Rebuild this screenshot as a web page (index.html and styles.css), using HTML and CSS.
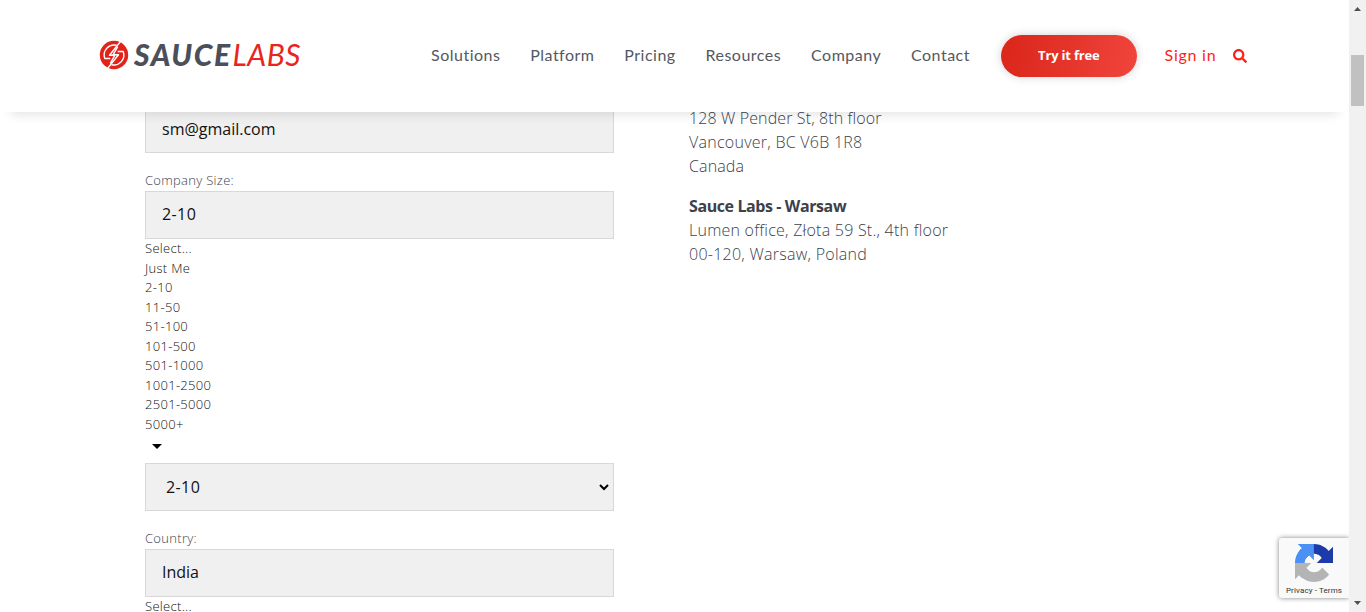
FILE: index.html
```html
<!DOCTYPE html>
<html lang="en">
<head>
<meta charset="utf-8">
<title>Contact | Sauce Labs</title>
<link rel="stylesheet" href="styles.css">
</head>
<body>
<div class="page">
  <header class="header">
    <svg class="logo" width="206" height="40" viewBox="0 -4 206 40">
      <circle cx="15" cy="16" r="14.2" fill="#e2231a"/>
      <g fill="none" stroke="#fff" stroke-width="1.400" stroke-linejoin="round">
        <path d="M21.500 2.500 10.500 16.300H15.800L11.300 24.300"/>
        <path d="M8.500 29.500 19.500 15.700H14.200L18.700 7.700"/>
        <path d="M17.500 6.300A10 10 0 0 0 5.800 19.500h5.500"/>
        <path d="M12.500 25.700A10 10 0 0 0 24.200 12.500h-5.500"/>
      </g>
      <text class="logo-bold" x="35" y="26.700" textLength="96">SAUCE</text>
      <text class="logo-light" x="133.500" y="26.700" textLength="68">LABS</text>
    </svg>
    <nav class="nav">
      <a>Solutions</a><a>Platform</a><a>Pricing</a><a>Resources</a><a>Company</a><a>Contact</a>
      <a class="trial">Try it free</a>
      <a class="signin">Sign in</a>
    </nav>
    <svg class="search" width="14" height="14" viewBox="0 0 512 512" fill="#ff1f17"><path d="M505 442.700 405.300 343c-4.500-4.500-10.600-7-17-7H372c27.600-35.300 44-79.700 44-128C416 93.100 322.900 0 208 0S0 93.100 0 208s93.100 208 208 208c48.300 0 92.700-16.400 128-44v16.300c0 6.400 2.500 12.500 7 17l99.700 99.700c9.400 9.400 24.600 9.400 33.900 0l28.300-28.300c9.400-9.400 9.400-24.600.1-34zM208 336c-70.700 0-128-57.200-128-128 0-70.700 57.200-128 128-128 70.700 0 128 57.200 128 128 0 70.700-57.200 128-128 128z"/></svg>
  </header>
  <main class="content">
    <form class="form">
      <div class="field">sm@gmail.com</div>
      <div class="label">Company Size:</div>
      <div class="field size">2-10</div>
      <div class="options">
        <div>Select...</div><div>Just Me</div><div>2-10</div><div>11-50</div><div>51-100</div><div>101-500</div><div>501-1000</div><div>1001-2500</div><div>2501-5000</div><div>5000+</div>
      </div>
      <div class="caret"><svg width="10" height="5" viewBox="0 0 10 5"><path d="M0 0h10L5 5z"/></svg></div>
      <div class="field size select"><span>2-10</span><svg width="10" height="7" viewBox="0 0 10 7"><path d="M1 1l4 4 4-4" fill="none" stroke="#000" stroke-width="2"/></svg></div>
      <div class="label">Country:</div>
      <div class="field country">India</div>
      <div class="options"><div>Select...</div></div>
    </form>
    <section class="offices">
      <p>128 W Pender St, 8th floor<br><span class="city">Vancouver, BC V6B 1R8</span><br>Canada</p>
      <p><strong>Sauce Labs - Warsaw</strong><br><span class="street">Lumen office, Złota 59 St., 4th floor</span><br><span class="city">00-120, Warsaw, Poland</span></p>
    </section>
  </main>
  <aside class="badge">
    <svg width="38" height="38" viewBox="0 0 64 64">
      <path fill="#1c3aa9" d="M64 31.955a33 33 0 0 0-.037-1.370V4.687l-7.160 7.160C50.943 4.674 42.033.093 32.050.093c-10.389 0-19.618 4.960-25.458 12.640l11.736 11.860a15.550 15.550 0 0 1 4.754-5.334c2.050-1.600 4.952-2.906 8.968-2.906.485 0 .860.057 1.135.163 4.976.393 9.288 3.140 11.828 7.124l-8.307 8.307L64 31.953"/>
      <path fill="#4a90f5" d="M31.862.094a33 33 0 0 0-1.370.037H4.594l7.160 7.160C4.580 13.150 0 22.060 0 32.045c0 10.389 4.960 19.618 12.640 25.458L24.500 45.768a15.550 15.550 0 0 1-5.334-4.754c-1.600-2.050-2.906-4.952-2.906-8.968 0-.485.057-.860.163-1.135.393-4.976 3.140-9.288 7.124-11.828l8.307 8.307L31.860.095"/>
      <path fill="#b4b4b4" d="M.001 32.045c.008.460.018.916.037 1.370v25.898l7.160-7.160c5.860 7.173 14.770 11.754 24.754 11.754 10.389 0 19.618-4.960 25.458-12.640l-11.736-11.860a15.550 15.550 0 0 1-4.754 5.334c-2.050 1.600-4.952 2.906-8.968 2.906-.485 0-.860-.057-1.135-.163-4.976-.393-9.288-3.140-11.828-7.124l8.307-8.307L0 32.046"/>
    </svg>
    <div class="terms">Privacy - Terms</div>
  </aside>
  <div class="scrollbar">
    <svg width="7" height="4" viewBox="0 0 7 4" fill="#505050"><path d="M0 4 3.500 0 7 4z"/></svg>
    <div class="thumb"></div>
    <svg width="7" height="4" viewBox="0 0 7 4" fill="#505050"><path d="M0 0h7L3.500 4z"/></svg>
  </div>
</div>
</body>
</html>
```
FILE: styles.css
```css
* { box-sizing: border-box; }
body { margin: 0; background: #fff; font-family: "Open Sans", "Noto Sans", sans-serif; font-weight: 300; color: #3c414a; overflow: hidden; }
.page { position: relative; width: 1366px; height: 612px; overflow: hidden; }

.header { position: absolute; z-index: 2; top: 0; left: 0; width: 1349px; height: 112px; padding-left: 99px; display: flex; align-items: center; background: #fff; box-shadow: 0 13px 11px -11px rgba(0, 0, 0, .12); }
.logo { flex: none; margin-top: -2px; }
.logo text { font-family: Lato, sans-serif; font-style: italic; font-size: 30px; }
.logo .logo-bold { font-weight: 900; fill: #4a4f5a; }
.logo .logo-light { font-weight: 400; fill: #e8251e; }
.nav { display: flex; align-items: center; gap: 29.8px; margin-left: 126px; font-family: Lato, sans-serif; font-size: 16px; line-height: 20px; font-weight: 400; letter-spacing: .5px; color: #535861; white-space: nowrap; }
.nav a { padding-bottom: 2px; }
.nav .trial { width: 136px; height: 42px; margin-left: 1px; padding: 0; border-radius: 21px; background: linear-gradient(100deg, #da251a, #f0453c); box-shadow: 0 0 10px rgba(0, 0, 0, .18); color: #fff; font: 700 13px/41px "Open Sans", sans-serif; letter-spacing: -.2px; text-align: center; }
.nav .signin { margin-left: -2px; color: #ff1f17; letter-spacing: .75px; }
.search { margin-left: 17px; }

.content { display: flex; gap: 75px; padding: 105px 0 0 145px; }
.form { width: 469px; }
.field { height: 48px; padding: 0 17px 0 16px; border: 1px solid #d8d8d8; background: #f0f0f0; color: #111; font-size: 16px; line-height: 46px; font-weight: 400; }
.size { letter-spacing: .4px; line-height: 45px; }
.country { line-height: 45px; }
.label, .options { font-size: 13px; line-height: 19.5px; letter-spacing: .3px; }
.label { height: 38px; padding-top: 18px; }
.options { color: #111; }
.caret { height: 29px; padding: 9px 0 0 7px; line-height: 0; }
.select { display: flex; align-items: center; justify-content: space-between; padding: 0 4px 0 20px; }
.offices { padding-top: 1px; font-size: 16px; line-height: 24px; letter-spacing: .12px; white-space: nowrap; }
.offices p { margin: 0 0 16px; }
.offices .city { letter-spacing: .26px; }
.offices .street { letter-spacing: .24px; }
.offices strong { font-weight: 700; letter-spacing: -.4px; }

.badge { position: absolute; top: 538px; left: 1279px; width: 70px; height: 60px; padding-top: 6px; background: #f9f9f9; border-radius: 3px 0 0 3px; box-shadow: 0 0 5px gray; text-align: center; line-height: 0; }
.terms { margin-top: 4px; font: 400 8px/10px Roboto, sans-serif; letter-spacing: .12px; color: #333; }
.scrollbar { position: absolute; z-index: 3; top: 0; left: 1349px; width: 17px; height: 612px; padding: 7px 0; display: flex; flex-direction: column; align-items: center; background: #f1f1f1; }
.thumb { width: 13px; height: 51px; margin: 44px 0 auto; background: #c1c1c1; }
```
